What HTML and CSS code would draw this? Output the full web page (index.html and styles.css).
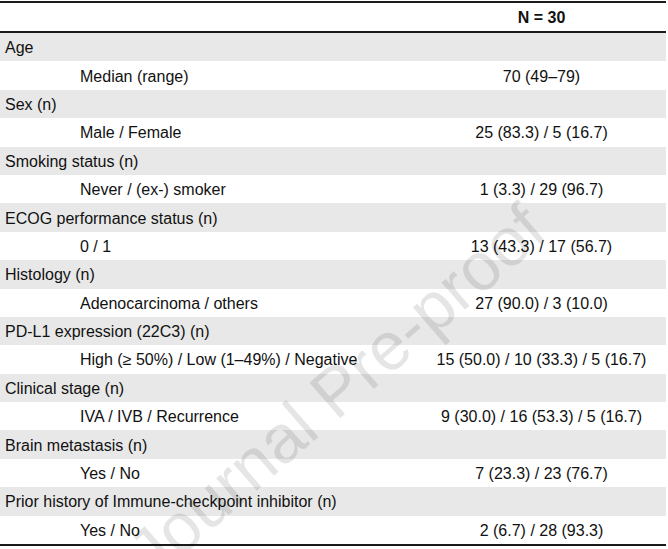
FILE: index.html
```html
<!DOCTYPE html>
<html>
<head>
<meta charset="utf-8">
<link rel="stylesheet" href="styles.css">
</head>
<body>
<div class="page">
  <table class="tbl">
    <thead>
      <tr><th class="lab"></th><th class="val">N = 30</th></tr>
    </thead>
    <tbody>
      <tr class="grp"><td class="lab">Age</td><td class="val"></td></tr>
      <tr><td class="lab sub">Median (range)</td><td class="val">70 (49–79)</td></tr>
      <tr class="grp"><td class="lab">Sex (n)</td><td class="val"></td></tr>
      <tr><td class="lab sub">Male / Female</td><td class="val">25 (83.3) / 5 (16.7)</td></tr>
      <tr class="grp"><td class="lab">Smoking status (n)</td><td class="val"></td></tr>
      <tr><td class="lab sub">Never / (ex-) smoker</td><td class="val">1 (3.3) / 29 (96.7)</td></tr>
      <tr class="grp"><td class="lab">ECOG performance status (n)</td><td class="val"></td></tr>
      <tr><td class="lab sub">0 / 1</td><td class="val">13 (43.3) / 17 (56.7)</td></tr>
      <tr class="grp"><td class="lab">Histology (n)</td><td class="val"></td></tr>
      <tr><td class="lab sub">Adenocarcinoma / others</td><td class="val">27 (90.0) / 3 (10.0)</td></tr>
      <tr class="grp"><td class="lab">PD-L1 expression (22C3) (n)</td><td class="val"></td></tr>
      <tr><td class="lab sub">High (≥ 50%) / Low (1–49%) / Negative</td><td class="val">15 (50.0) / 10 (33.3) / 5 (16.7)</td></tr>
      <tr class="grp"><td class="lab">Clinical stage (n)</td><td class="val"></td></tr>
      <tr><td class="lab sub">IVA / IVB / Recurrence</td><td class="val">9 (30.0) / 16 (53.3) / 5 (16.7)</td></tr>
      <tr class="grp"><td class="lab">Brain metastasis (n)</td><td class="val"></td></tr>
      <tr><td class="lab sub">Yes / No</td><td class="val">7 (23.3) / 23 (76.7)</td></tr>
      <tr class="grp"><td class="lab">Prior history of Immune-checkpoint inhibitor (n)</td><td class="val"></td></tr>
      <tr class="last"><td class="lab sub">Yes / No</td><td class="val">2 (6.7) / 28 (93.3)</td></tr>
    </tbody>
  </table>
  <div class="watermark">Journal Pre-proof</div>
</div>
</body>
</html>
```
FILE: styles.css
```css
html, body {
  margin: 0;
  padding: 0;
  background: #ffffff;
}
body {
  font-family: "Liberation Sans", Arial, sans-serif;
  color: #111111;
  overflow: hidden;
}
.page {
  position: relative;
  width: 668px;
  height: 549px;
  overflow: hidden;
  padding-top: 1px;
  box-sizing: border-box;
}
.tbl {
  width: 666px;
  border-collapse: collapse;
  table-layout: fixed;
  font-size: 16px;
}
.tbl th, .tbl td {
  padding: 2px 0 0 0;
  height: 26.4px;
  vertical-align: middle;
  white-space: nowrap;
}
.tbl thead tr {
  border-top: 2px solid #1a1a1a;
  border-bottom: 2px solid #1a1a1a;
}
.tbl thead th {
  height: 26px;
  font-weight: bold;
}
.lab {
  width: 412px;
  text-align: left;
  padding-left: 5px !important;
}
.lab.sub {
  padding-left: 80px !important;
}
.val {
  text-align: center;
}
.grp {
  background: #e8e8e8;
}
.tbl tr.last {
  border-bottom: 2px solid #1a1a1a;
}
.watermark {
  position: absolute;
  left: 336px;
  top: 390px;
  transform: translate(-50%, -50%) rotate(-41deg);
  font-family: "Liberation Sans", Arial, sans-serif;
  font-size: 68px;
  color: rgba(0, 0, 0, 0.1);
  white-space: nowrap;
  pointer-events: none;
}
```
